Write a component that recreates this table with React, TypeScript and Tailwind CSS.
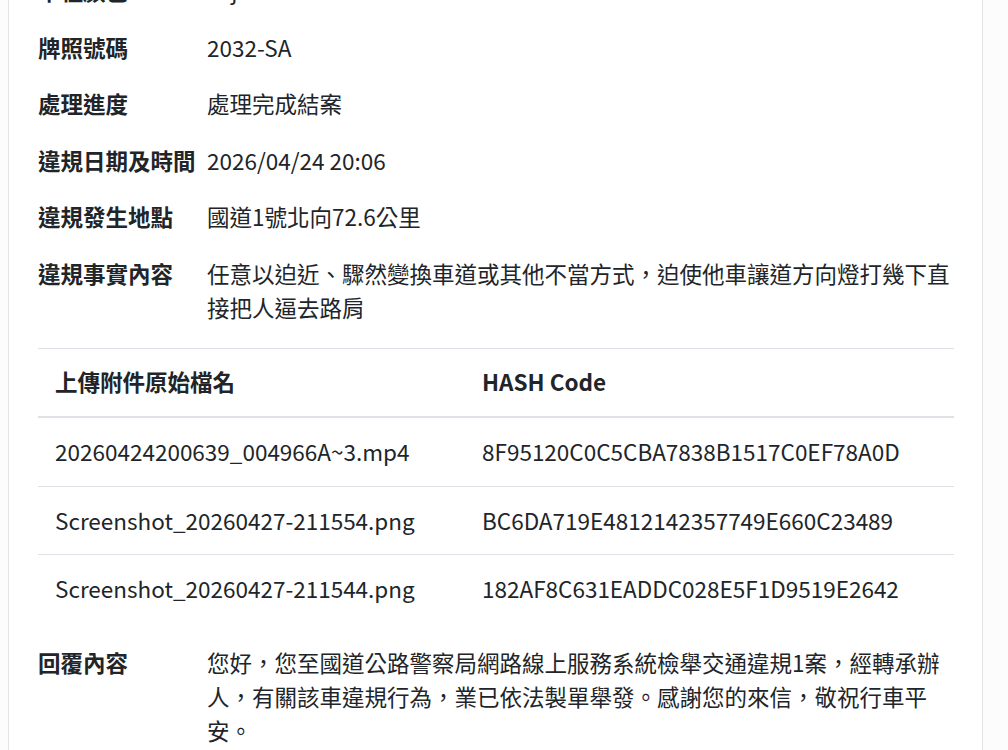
import React from "react";

const details: { label: string; value: React.ReactNode }[] = [
  {
    label: "車種顏色",
    value: (
      <span className="flex">
        <span className="w-[193px]">Tej</span>
        <span>400m</span>
      </span>
    ),
  },
  { label: "牌照號碼", value: "2032-SA" },
  { label: "處理進度", value: "處理完成結案" },
  { label: "違規日期及時間", value: "2026/04/24 20:06" },
  { label: "違規發生地點", value: "國道1號北向72.6公里" },
  {
    label: "違規事實內容",
    value: "任意以迫近、驟然變換車道或其他不當方式，迫使他車讓道方向燈打幾下直接把人逼去路肩",
  },
];

const files = [
  { name: "20260424200639_004966A~3.mp4", hash: "8F95120C0C5CBA7838B1517C0EF78A0D" },
  { name: "Screenshot_20260427-211554.png", hash: "BC6DA719E4812142357749E660C23489" },
  { name: "Screenshot_20260427-211544.png", hash: "182AF8C631EADDC028E5F1D9519E2642" },
];

function Row({ label, children }: { label: string; children: React.ReactNode }) {
  return (
    <div className="flex mb-[22.5px]">
      <dt className="w-[169px] shrink-0 font-bold">{label}</dt>
      <dd className="flex-1 min-w-0">{children}</dd>
    </div>
  );
}

export default function App() {
  return (
    <div
      className="min-h-screen overflow-hidden bg-[#fcfcfc] text-[#212529] text-[22.5px] leading-[34px]"
      style={{ fontFamily: '"Noto Sans CJK TC", "Noto Sans", sans-serif' }}
    >
      <div className="-mt-[56px] ml-[8px] w-[975px] border border-[#e3e3e3] bg-white pl-[29px] pr-[28px] pt-[28px] pb-[28px]">
        <dl className="pb-[2px]">
          {details.map(({ label, value }) => (
            <Row key={label} label={label}>
              {value}
            </Row>
          ))}
        </dl>

        {/* Attachments */}
        <table className="w-full border-collapse mb-[22.5px]">
          <thead>
            <tr>
              <th className="w-[427px] px-[17px] pt-[15px] pb-[18px] text-left font-bold border-t border-b-2 border-[#dee2e6]">
                上傳附件原始檔名
              </th>
              <th className="px-[17px] pt-[15px] pb-[18px] text-left font-bold border-t border-b-2 border-[#dee2e6]">
                HASH Code
              </th>
            </tr>
          </thead>
          <tbody>
            {files.map((f) => (
              <tr key={f.name}>
                <td className="px-[17px] pt-[16px] pb-[17.5px] border-t border-[#dee2e6]">{f.name}</td>
                <td className="px-[17px] pt-[16px] pb-[17.5px] border-t border-[#dee2e6]">{f.hash}</td>
              </tr>
            ))}
          </tbody>
        </table>

        <dl>
          <Row label="回覆內容">
            您好，您至國道公路警察局網路線上服務系統檢舉交通違規1案，經轉承辦人，有關該車違規行為，業已依法製單舉發。感謝您的來信，敬祝行車平安。
          </Row>
        </dl>
      </div>
    </div>
  );
}
